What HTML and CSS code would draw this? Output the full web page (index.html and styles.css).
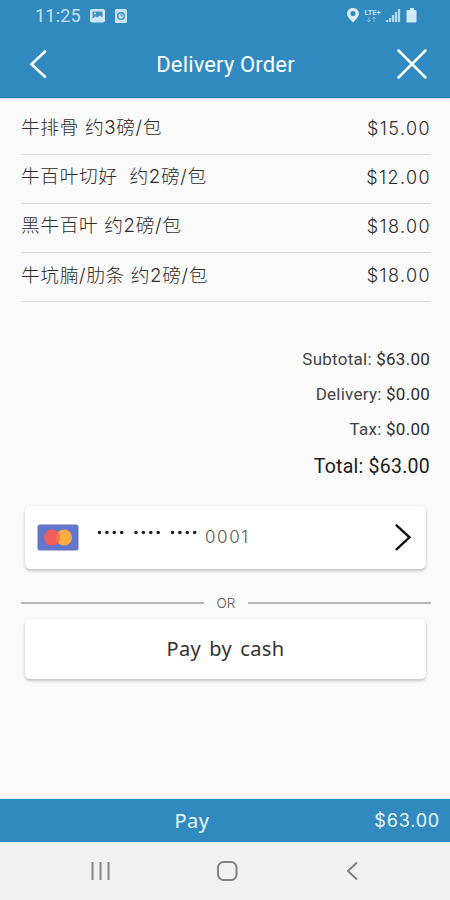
FILE: index.html
```html
<!DOCTYPE html>
<html lang="en">
<head>
<meta charset="utf-8">
<title>Delivery Order</title>
<link rel="stylesheet" href="styles.css">
</head>
<body>
<div class="screen">
  <header class="header">
    <div class="status">
      <span class="clock">11:25</span>
      <svg class="status-left" width="40" height="16" viewBox="0 0 40 16">
        <rect x="0" y="1" width="15" height="13.5" rx="2" fill="#cce6f7"/>
        <path d="M2.500 3.500h10v6l-3-2-2 2-2-1-3 2z" fill="#4590bf"/>
        <circle cx="5" cy="5.500" r="1" fill="#cce6f7"/>
        <rect x="25" y="1" width="12" height="14" rx="1.5" fill="#cce6f7"/>
        <circle cx="31" cy="8" r="3.3" fill="none" stroke="#3d8fc2" stroke-width="1.5"/>
        <path d="M31 6v2h2" fill="none" stroke="#3d8fc2"/>
      </svg>
      <svg class="status-right" width="72" height="17" viewBox="0 0 72 17">
        <path fill-rule="evenodd" d="M7 1C3.700 1 1 3.500 1 6.500 1 10 7 15.500 7 15.500S13 10 13 6.500C13 3.500 10.300 1 7 1zm0 3a2.600 2.600 0 1 1 0 5.200A2.600 2.600 0 0 1 7 4z" fill="#e1f1fb"/>
        <text x="18.500" y="7.500" class="lte">LTE+</text>
        <path d="M23 10v5m-1.800-1.800L23 15l1.800-1.800M28 15v-5m-1.800 1.800L28 10l1.800 1.800" fill="none" stroke="#8fc0df" stroke-width=".9"/>
        <path d="M41 15v-2M44 15v-4M47 15V8M50 15V5M53 15V2" fill="none" stroke="#b5d7ec" stroke-width="2.300"/>
        <path d="M64 1h4v2h1.500q1 0 1 1v10.500q0 1-1 1h-8q-1 0-1-1V4q0-1 1-1H64z" fill="#d2e9f7"/>
      </svg>
    </div>
    <div class="titlebar">
      <svg width="18" height="30" viewBox="0 0 18 30"><path d="M16 2.500L2.500 15.300l13.500 12.500" fill="none" stroke="#fff" stroke-width="2.600" stroke-linecap="round"/></svg>
      <h1 class="title">Delivery Order</h1>
      <svg width="30" height="30" viewBox="0 0 30 30"><path d="M1.500 1.500l27 27M28.500 1.500l-27 27" fill="none" stroke="#fff" stroke-width="2.500" stroke-linecap="round"/></svg>
    </div>
  </header>

  <main class="content">
    <ul class="items">
      <li class="item"><span class="name">牛排骨 约3磅/包</span><span class="price">$15.00</span></li>
      <li class="item"><span class="name">牛百叶切好  约2磅/包</span><span class="price">$12.00</span></li>
      <li class="item"><span class="name">黑牛百叶 约2磅/包</span><span class="price">$18.00</span></li>
      <li class="item"><span class="name">牛坑腩/肋条 约2磅/包</span><span class="price">$18.00</span></li>
    </ul>

    <div class="totals">
      <div class="line">Subtotal: <span class="amount">$63.00</span></div>
      <div class="line">Delivery: <span class="amount">$0.00</span></div>
      <div class="line">Tax: <span class="amount">$0.00</span></div>
      <div class="line grand">Total: $63.00</div>
    </div>

    <div class="card payment">
      <svg width="42" height="27" viewBox="0 0 42 27">
        <rect x=".5" y=".5" width="41" height="26" rx="2.500" fill="#6277ca"/>
        <circle cx="27" cy="13.500" r="8" fill="#fbac43"/>
        <circle cx="15" cy="13.500" r="8" fill="#f45b5b"/>
        <path d="M21 8.200a8 8 0 0 1 0 10.600a8 8 0 0 1 0-10.600z" fill="#f57a4c"/>
      </svg>
      <svg class="dots" width="102" height="5" viewBox="0 0 102 5"><path d="M2.500 2.500H25M39 2.500H61.500M75.500 2.500H98" fill="none" stroke="#222" stroke-width="3.600" stroke-linecap="round" stroke-dasharray="0 7.400"/></svg>
      <span class="digits">0001</span>
      <svg class="chevron" width="18" height="28" viewBox="0 0 18 28"><path d="M2.500 2.300l13 12-13 12" fill="none" stroke="#111" stroke-width="2.400" stroke-linecap="round"/></svg>
    </div>

    <div class="divider"><span>OR</span></div>

    <div class="card cash">Pay by cash</div>
  </main>

  <div class="paybar"><span></span><span class="pay">Pay</span><span class="due">$63.00</span></div>

  <nav class="nav">
    <svg width="20" height="20" viewBox="0 0 20 20"><path d="M2.500 1v18M10.500 1v18M18.500 1v18" fill="none" stroke="#858585" stroke-width="2"/></svg>
    <svg width="22" height="20" viewBox="0 0 22 20"><rect x="1" y="1" width="18.500" height="18" rx="5.500" fill="none" stroke="#808080" stroke-width="2"/></svg>
    <svg width="12" height="20" viewBox="0 0 12 20"><path d="M11 1.500L2 10l9 8.500" fill="none" stroke="#808080" stroke-width="2"/></svg>
  </nav>
</div>
</body>
</html>
```
FILE: styles.css
```css
* { box-sizing: border-box; }
body { margin: 0; font-family: Roboto, "Noto Sans CJK SC", sans-serif; background: #fafafa; }
svg { display: block; flex: none; }
.screen { width: 450px; height: 900px; display: flex; flex-direction: column; overflow: hidden; background: #fafafa; }

.header { height: 98px; flex: none; background: #308abf; border-bottom: 1px solid #247bb0; box-shadow: 0 1px 2px #c6d8e4; color: #fff; }
.status { height: 31px; display: flex; align-items: center; padding: 0 32px 0 35px; }
.clock { width: 55px; font-size: 18px; letter-spacing: .2px; color: #c6e2f3; }
.status-right { margin-left: auto; }
.lte { font: 700 7.500px Roboto, sans-serif; fill: #c6e2f3; }
.titlebar { height: 66px; display: flex; align-items: center; justify-content: space-between; padding: 0 23px 0 29px; }
.title { margin: 2px 0 0; padding-left: 7px; font-size: 22px; line-height: 30px; font-weight: 400; letter-spacing: .15px; }

.content { flex: 1; padding: 7.500px 19px 0 21px; }
.items { list-style: none; margin: 0; padding: 0; }
.item { height: 49.200px; display: flex; align-items: center; justify-content: space-between; border-bottom: 1px solid #dcdcdc; color: #2c2c2c; }
.name { font: 300 18.700px/28px Inter, "Noto Sans CJK SC", sans-serif; letter-spacing: .65px; white-space: pre; margin-top: -3px; }
.price { font: 300 18px/28px Inter, sans-serif; letter-spacing: 1.400px; margin-top: -2px; }

.totals { padding: 39.500px 1px 0 0; text-align: right; color: #444; }
.line { height: 35.300px; line-height: 35px; font-size: 17px; letter-spacing: .25px; }
.amount { color: #2c2c2c; }
.grand { height: 38px; line-height: 38px; font-size: 19.500px; color: #1a1a1a; }

.card { margin: 0 5px 0 4px; background: #fff; border-radius: 5px; box-shadow: 0 2px 3px #c4c4c4, 0 0 2px #e3e3e3; }
.payment { height: 63px; margin-top: 20px; display: flex; align-items: center; padding: 0 14px 0 12px; }
.dots { margin: 0 6px 10px 18px; }
.digits { font: 300 17px/24px Inter, sans-serif; letter-spacing: 1.600px; color: #555; }
.chevron { margin-left: auto; }
.divider { height: 50px; padding-top: 19px; display: flex; align-items: center; justify-content: center; gap: 12.500px; font: 300 13.500px/18px Inter, sans-serif; color: #555; }
.divider::before, .divider::after { content: ""; flex: 1; height: 2px; background: #b5b5b5; }
.cash { height: 60px; font: 400 20px/60px "Noto Sans", sans-serif; color: #333; text-align: center; letter-spacing: .4px; word-spacing: 2.500px; }

.paybar { height: 43px; flex: none; display: grid; grid-template-columns: 1fr auto 1fr; align-items: center; padding: 0 10px; background: #308abf; color: #e8f8ff; font: 400 20px/42px "Noto Sans", sans-serif; }
.pay { transform: translateX(-33px); letter-spacing: .5px; }
.due { justify-self: end; font: 400 18px/42px Inter, sans-serif; letter-spacing: .8px; }
.nav { height: 58px; flex: none; display: flex; align-items: center; justify-content: space-between; padding: 0 92px 0 90px; background: #f1f1f1; }
```
